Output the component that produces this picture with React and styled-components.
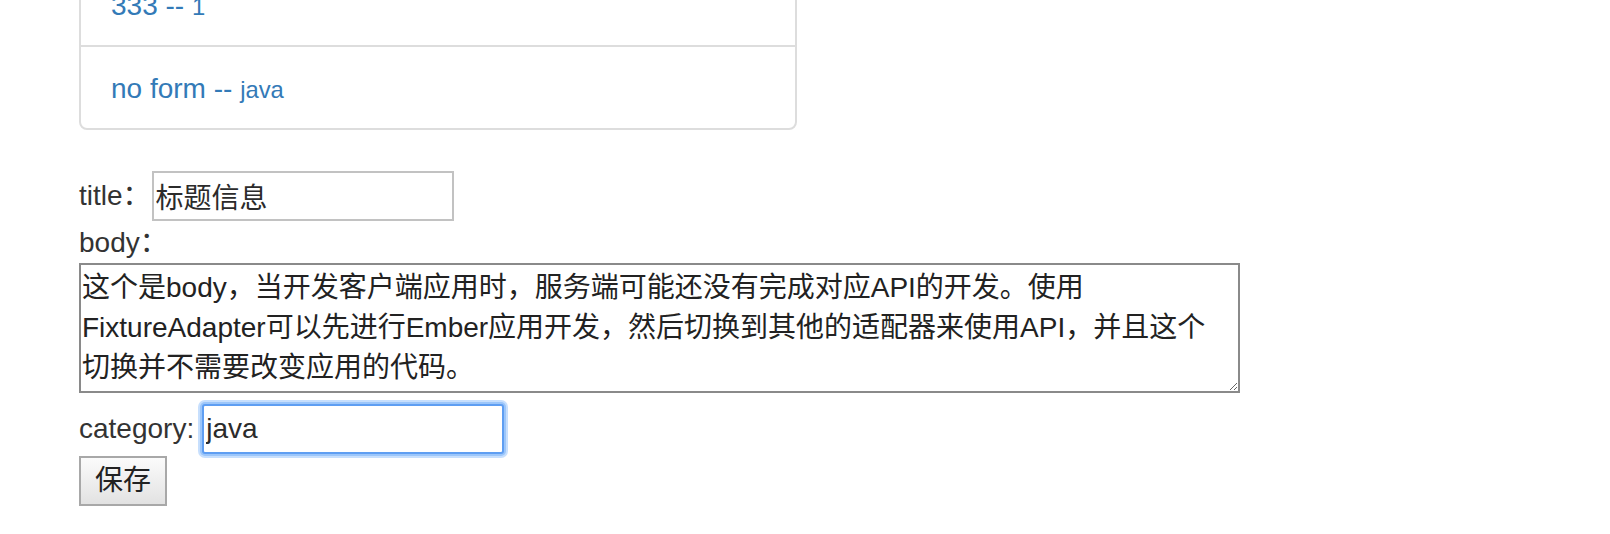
import React from "react";
import styled, { createGlobalStyle } from "styled-components";

const GlobalStyle = createGlobalStyle`
  html, body {
    margin: 0;
    padding: 0;
    background: #fff;
  }
  body {
    font-family: "Liberation Sans", "Noto Sans CJK SC", Arial, sans-serif;
    font-size: 28px;
    line-height: 40px;
    color: #333;
  }
  * { box-sizing: border-box; }
`;

const Page = styled.div`
  margin-top: -38px;
  padding-left: 79px;
`;

const Panel = styled.div`
  width: 718px;
  border: 2px solid #ddd;
  border-radius: 8px;
  background: #fff;
  margin-bottom: 40px;
`;

const ListItem = styled.div`
  padding: 22px 30px 18px;
  line-height: 40px;
  & + & {
    border-top: 2px solid #ddd;
  }
`;

const ItemLink = styled.a`
  color: #337ab7;
  text-decoration: none;
  font-size: 28px;
`;

const Small = styled.small`
  font-size: 85%;
`;

const Form = styled.form`
  display: flex;
  flex-direction: column;
  align-items: flex-start;
`;

const FieldRow = styled.div`
  display: flex;
  align-items: center;
  padding: ${(p) => p.$pad || "0"};
  margin-top: ${(p) => p.$top || "0"};
`;

const Label = styled.label`
  display: block;
  line-height: 40px;
  color: #333;
  white-space: nowrap;
`;

const TextInput = styled.input`
  width: 302px;
  height: 50px;
  margin: 0 0 0 ${(p) => p.$gap || "3px"};
  padding: 0 2px;
  font: inherit;
  font-size: 28px;
  color: #2b2b2b;
  background: #fff;
  outline: none;
  border: 2px solid ${(p) => (p.$focused ? "#5f9ef2" : "#c2c2c2")};
  border-radius: ${(p) => (p.$focused ? "3px" : "0")};
  box-shadow: ${(p) =>
    p.$focused
      ? "0 0 0 2px #9cc6fa, 0 0 0 4px rgba(180, 212, 252, 0.75)"
      : "none"};
`;

const TextArea = styled.textarea`
  display: block;
  width: 1161px;
  height: 130px;
  margin: 0;
  padding: 3px 8px 3px 1px;
  font: inherit;
  font-size: 28px;
  line-height: 40px;
  color: #222;
  border: 2px solid #8a8a8a;
  border-radius: 0;
  outline: none;
  overflow: hidden;
`;

const SaveButton = styled.button`
  margin-top: 2px;
  width: 88px;
  height: 50px;
  padding: 0;
  font: inherit;
  font-size: 28px;
  line-height: 40px;
  color: #222;
  border: 2px solid #a8a8a8;
  border-radius: 0;
  background: linear-gradient(#fbfbfb, #e2e2e2);
`;

export default function App() {
  return (
    <>
      <GlobalStyle />
      <Page>
        <Panel>
          <ListItem>
            <ItemLink href="#">
              333 -- <Small>1</Small>
            </ItemLink>
          </ListItem>
          <ListItem>
            <ItemLink href="#">
              no form -- <Small>java</Small>
            </ItemLink>
          </ListItem>
        </Panel>
        <Form onSubmit={(e) => e.preventDefault()}>
          <FieldRow $pad="1px 0 2px">
            <Label>title：</Label>
            <TextInput $gap="1px" defaultValue="标题信息" />
          </FieldRow>
          <Label>body：</Label>
          <TextArea defaultValue="这个是body，当开发客户端应用时，服务端可能还没有完成对应API的开发。使用FixtureAdapter可以先进行Ember应用开发，然后切换到其他的适配器来使用API，并且这个切换并不需要改变应用的代码。" />
          <FieldRow $top="11px">
            <Label>category:</Label>
            <TextInput $focused $gap="8px" defaultValue="java" />
          </FieldRow>
          <SaveButton type="button">保存</SaveButton>
        </Form>
      </Page>
    </>
  );
}
